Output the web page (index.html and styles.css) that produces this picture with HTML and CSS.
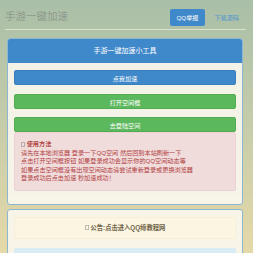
FILE: index.html
```html
<!DOCTYPE html>
<html lang="zh-CN">
<head>
  <meta charset="UTF-8" />
  <meta name="viewport" content="width=device-width, initial-scale=1.0"/>
  <title>手游一键加速</title>
  <link rel="stylesheet" href="styles.css">
</head>
<body>
  <div class="container">
    <div class="page-header">
      <h3 class="site-title">手游一键加速</h3>
      <ul class="nav-pills">
        <li class="active"><a href="#">QQ举报</a></li>
        <li><a href="#">下载源码</a></li>
      </ul>
    </div>

    <div class="panel">
      <div class="panel-heading">手游一键加速小工具</div>
      <div class="panel-body">
        <a href="#" class="btn btn-primary">点我加速</a>
        <a href="#" class="btn btn-success">打开空间框</a>
        <a href="#" class="btn btn-success">去登陆空间</a>
        <div class="alert alert-danger">
          <b><span class="icon"></span> 使用方法</b><br>
          请先在本地浏览器 登录一下QQ空间 然后回到本站刷新一下<br>
          点击打开空间框按钮 如果登录成功会显示你的QQ空间动态等<br>
          如果点击空间框没有出现空间动态请尝试重新登录或更换浏览器<br>
          登录成功后点击加速 秒加速成功！
        </div>
      </div>
    </div>

    <div class="panel">
      <div class="panel-body">
        <div class="alert alert-warning">
          <b><span class="icon"></span> 公告:点击进入QQ缔教程网</b>
        </div>
        <div class="alert alert-info">&nbsp;</div>
      </div>
    </div>
  </div>
</body>
</html>
```

FILE: styles.css
```css
:root {
  --primary: #3f88c9;
  --success: #5cb85c;
  --muted: #8e9a8c;
}

* {
  box-sizing: border-box;
  margin: 0;
  padding: 0;
}

html, body {
  height: 100%;
}

body {
  font-family: "Liberation Sans", "Noto Sans CJK SC", sans-serif;
  font-size: 6.15px;
  background: linear-gradient(to bottom, #a9bfa7 0%, #c3cbaa 45%, #e6d9a8 100%);
  overflow: hidden;
}

.container {
  padding: 0 7px 0 5px;
}

.page-header {
  display: flex;
  justify-content: space-between;
  align-items: center;
  height: 30px;
  border-bottom: 1px solid #dde2cf;
  margin-bottom: 8px;
}

.site-title {
  font-size: 10.5px;
  font-weight: normal;
  color: var(--muted);
  padding-top: 1px;
}

.nav-pills {
  display: flex;
  list-style: none;
  gap: 2px;
  padding-top: 5px;
}

.nav-pills a {
  display: block;
  padding: 0 7px;
  height: 17px;
  line-height: 17px;
  border-radius: 2px;
  color: #4f94d0;
  text-decoration: none;
}

.nav-pills .active a {
  background: var(--primary);
  color: #fff;
}

.panel {
  margin: 0 3px 4px 2px;
  border: 1px solid #8db6d0;
  border-radius: 3px;
  background: rgba(250, 248, 240, 0.88);
  overflow: hidden;
}

.panel-heading {
  height: 24px;
  line-height: 24px;
  text-align: center;
  font-size: 7px;
  color: #fff;
  background: var(--primary);
}

.panel-body {
  padding: 7px 6px 7px;
}

.btn {
  display: block;
  height: 15px;
  line-height: 15px;
  text-align: center;
  color: #fff;
  text-decoration: none;
  border-radius: 2px;
}

.btn + .btn {
  margin-top: 8.5px;
}

.btn-primary {
  background: var(--primary);
  border: 1px solid #3a7fbd;
}

.btn-success {
  background: var(--success);
  border: 1px solid #52ad52;
}

.alert {
  border: 1px solid transparent;
  border-radius: 2px;
  margin-bottom: 6px;
}

.alert-danger {
  background: #f1dcdc;
  border-color: #ecd0d3;
  color: #b0403f;
  padding: 7px 6px 7px;
  line-height: 8.6px;
}

.alert-warning {
  background: #fbf6e2;
  border-color: #f7efd7;
  color: #6f6248;
  height: 22px;
  line-height: 20px;
  text-align: center;
  font-size: 6.3px;
  margin-bottom: 9px;
}

.alert-info {
  background: #d9ecf5;
  height: 30px;
}

/* icon font is missing, so it shows as an empty box */
.icon {
  display: inline-block;
  width: 4px;
  height: 5px;
  border: 1px solid rgba(120, 110, 110, 0.45);
  vertical-align: -0.5px;
}
```
